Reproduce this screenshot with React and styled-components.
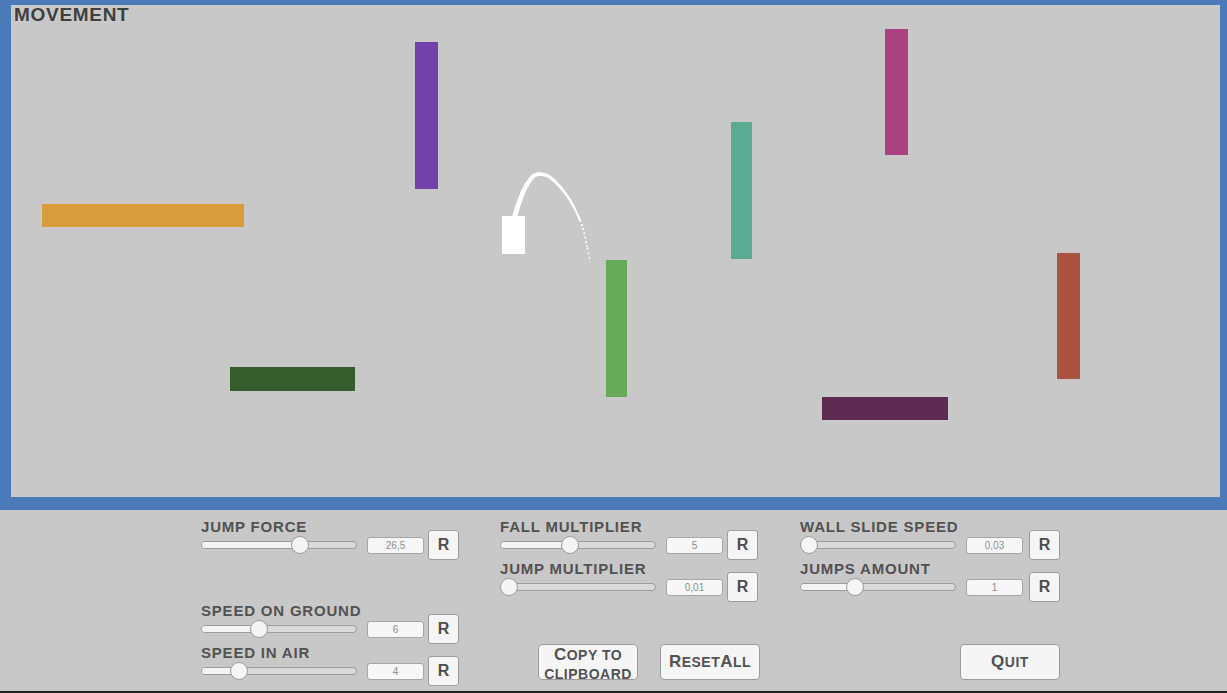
import React from 'react';
import styled, { createGlobalStyle } from 'styled-components';

const GlobalStyle = createGlobalStyle`
  html, body {
    margin: 0;
    padding: 0;
    background: #c8c8c8;
    font-family: "Liberation Sans", Arial, sans-serif;
  }
`;

const Page = styled.div`
  width: 1227px;
  height: 693px;
  display: flex;
  flex-direction: column;
  overflow: hidden;
  background: #c8c8c8;
`;

const GameFrame = styled.div`
  height: 510px;
  flex-shrink: 0;
  box-sizing: border-box;
  border-style: solid;
  border-color: #4b7ab8;
  border-width: 5px 7px 13px 11px;
`;

const Canvas = styled.div`
  position: relative;
  width: 100%;
  height: 100%;
  background: #c8c8c8;
  overflow: hidden;
`;

const Title = styled.div`
  padding-left: 3px;
  font-size: 19px;
  line-height: 20px;
  font-weight: bold;
  letter-spacing: 0.7px;
  color: #404040;
`;

const Block = styled.div`
  position: absolute;
  background: ${(p) => p.$color};
`;

const Trail = styled.svg`
  position: absolute;
  left: 0;
  top: 0;
`;

const Panel = styled.div`
  height: 183px;
  flex-shrink: 0;
  box-sizing: border-box;
  padding: 8px 0 0 201px;
  display: grid;
  grid-template-columns: 299px 300px 300px;
  grid-template-rows: repeat(4, 36px);
  row-gap: 6px;
  border-bottom: 2px solid #222;
`;

const Cell = styled.div`
  grid-column: ${(p) => p.$col};
  grid-row: ${(p) => p.$row};
  display: flex;
  flex-direction: column;
`;

const Label = styled.div`
  height: 18px;
  font-size: 15px;
  line-height: 17px;
  font-weight: bold;
  letter-spacing: 0.8px;
  color: #525252;
  white-space: nowrap;
`;

const ControlRow = styled.div`
  height: 18px;
  display: flex;
  align-items: center;
`;

const Track = styled.div`
  position: relative;
  width: 156px;
  height: 8px;
  box-sizing: border-box;
  border: 1px solid #9c9c9c;
  border-radius: 4px;
  background: #dadada;
`;

const Fill = styled.div`
  height: 100%;
  border-radius: 4px;
  background: #f4f4f4;
`;

const Thumb = styled.div`
  position: absolute;
  top: 50%;
  width: 18px;
  height: 18px;
  box-sizing: border-box;
  margin: -9px 0 0 -9px;
  border: 1px solid #9c9c9c;
  border-radius: 50%;
  background: #f5f5f5;
`;

const ValueBox = styled.div`
  width: 57px;
  height: 17px;
  margin-left: 10px;
  box-sizing: border-box;
  border: 1px solid #a6a6a6;
  border-radius: 3px;
  background: #f7f7f7;
  font-size: 10px;
  line-height: 15px;
  text-align: center;
  color: #8e8e8e;
`;

const ResetButton = styled.button`
  width: 31px;
  height: 30px;
  margin-left: ${(p) => p.$gap}px;
  padding: 0;
  flex-shrink: 0;
  border: 1px solid #9c9c9c;
  border-radius: 3px;
  background: #f5f5f5;
  font-family: "Liberation Sans", Arial, sans-serif;
  font-size: 16px;
  font-weight: bold;
  color: #4d4d4d;
`;

const ButtonRow = styled.div`
  grid-column: ${(p) => p.$col};
  grid-row: 4;
  display: flex;
  gap: 22px;
  padding-left: ${(p) => p.$offset}px;
`;

const BigButton = styled.button`
  width: 100px;
  height: 36px;
  padding: 0;
  border: 1px solid #9c9c9c;
  border-radius: 4px;
  background: #f5f5f5;
  font-family: "Liberation Sans", Arial, sans-serif;
  font-size: 14px;
  line-height: 19px;
  font-weight: bold;
  letter-spacing: 0.5px;
  color: #525252;
`;

const Cap = styled.span`
  font-size: 17px;
`;

const blocks = [
  { x: 31, y: 199, w: 202, h: 23, color: '#d99c3d' },
  { x: 404, y: 37, w: 23, h: 147, color: '#7241a9' },
  { x: 595, y: 255, w: 21, h: 137, color: '#66aa5a' },
  { x: 720, y: 117, w: 21, h: 137, color: '#5bab93' },
  { x: 874, y: 24, w: 23, h: 126, color: '#a9427f' },
  { x: 1046, y: 248, w: 23, h: 126, color: '#a9533f' },
  { x: 219, y: 362, w: 125, h: 24, color: '#365c2d' },
  { x: 811, y: 392, w: 126, h: 23, color: '#5d2a52' },
  { x: 491, y: 211, w: 23, h: 38, color: '#ffffff' },
];

const trailPoints = [
  [504, 211], [506.5, 202], [509, 195], [512, 187], [515.7, 180], [519, 175],
  [522.3, 171], [525.5, 169.5], [529, 169], [533, 169.6], [537.3, 171],
  [543, 175.5], [549, 181.7], [554, 188], [559, 195], [564, 204],
  [569, 215], [572, 223], [574, 231.7], [576.5, 243], [579, 256.7],
];

const controls = [
  { label: 'JUMP FORCE', value: '26,5', pos: 0.65, col: 1, row: 1, gap: 4 },
  { label: 'SPEED ON GROUND', value: '6', pos: 0.356, col: 1, row: 3, gap: 4 },
  { label: 'SPEED IN AIR', value: '4', pos: 0.212, col: 1, row: 4, gap: 4 },
  { label: 'FALL MULTIPLIER', value: '5', pos: 0.44, col: 2, row: 1, gap: 4 },
  { label: 'JUMP MULTIPLIER', value: '0,01', pos: 0, col: 2, row: 2, gap: 4 },
  { label: 'WALL SLIDE SPEED', value: '0,03', pos: 0, col: 3, row: 1, gap: 6 },
  { label: 'JUMPS AMOUNT', value: '1', pos: 0.335, col: 3, row: 2, gap: 6 },
];

const JumpTrail = () => {
  const n = trailPoints.length - 1;
  return (
    <Trail width="1209" height="492" viewBox="0 0 1209 492">
      {trailPoints.slice(0, n).map(([x1, y1], i) => {
        const [x2, y2] = trailPoints[i + 1];
        const t = i / n;
        return (
          <line
            key={i}
            x1={x1}
            y1={y1}
            x2={x2}
            y2={y2}
            stroke="#fff"
            strokeWidth={5 - 3.9 * t}
            strokeLinecap={t < 0.8 ? 'round' : 'butt'}
            strokeDasharray={t >= 0.8 ? '2 2.5' : undefined}
          />
        );
      })}
    </Trail>
  );
};

const Slider = ({ pos }) => {
  const left = 9 + pos * 138;
  return (
    <Track>
      <Fill style={{ width: `${left}px` }} />
      <Thumb style={{ left: `${left - 1}px` }} />
    </Track>
  );
};

const Control = ({ label, value, pos, col, row, gap }) => (
  <Cell $col={col} $row={row}>
    <Label>{label}</Label>
    <ControlRow>
      <Slider pos={pos} />
      <ValueBox>{value}</ValueBox>
      <ResetButton $gap={gap}>R</ResetButton>
    </ControlRow>
  </Cell>
);

export default function App() {
  return (
    <Page>
      <GlobalStyle />
      <GameFrame>
        <Canvas>
          <Title>MOVEMENT</Title>
          {blocks.map((b, i) => (
            <Block
              key={i}
              $color={b.color}
              style={{ left: b.x, top: b.y, width: b.w, height: b.h }}
            />
          ))}
          <JumpTrail />
        </Canvas>
      </GameFrame>
      <Panel>
        {controls.map((c) => (
          <Control key={c.label} {...c} />
        ))}
        <ButtonRow $col={2} $offset={38}>
          <BigButton>
            <Cap>C</Cap>OPY TO
            <br />
            CLIPBOARD
          </BigButton>
          <BigButton>
            <Cap>R</Cap>ESET<Cap>A</Cap>LL
          </BigButton>
        </ButtonRow>
        <ButtonRow $col={3} $offset={160}>
          <BigButton>
            <Cap>Q</Cap>UIT
          </BigButton>
        </ButtonRow>
      </Panel>
    </Page>
  );
}
